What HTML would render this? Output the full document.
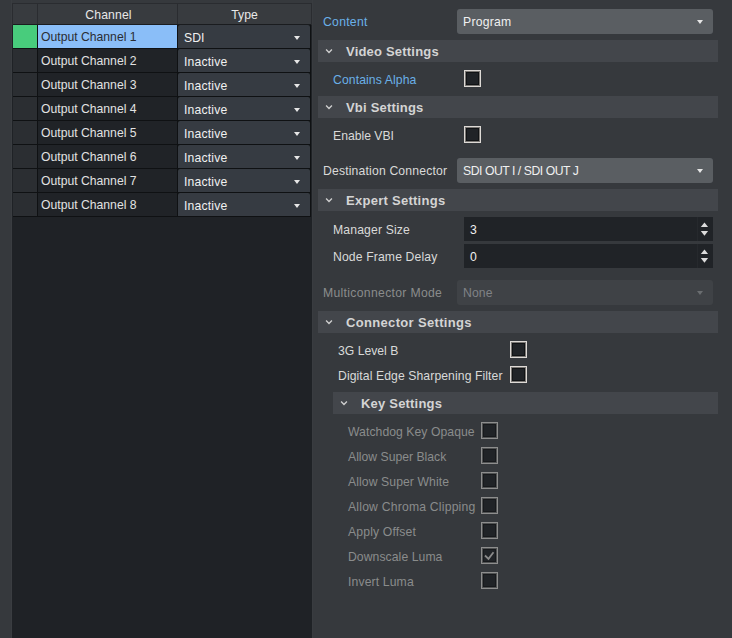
<!DOCTYPE html>
<html><head><meta charset="utf-8">
<style>
*{margin:0;padding:0;box-sizing:border-box}
html,body{width:732px;height:638px;overflow:hidden;background:#36393d;font-family:"Liberation Sans",sans-serif;font-size:12.2px;color:#d9d9d9}
div{position:absolute}
svg{position:absolute}
.t{white-space:nowrap;line-height:16px;height:16px;letter-spacing:0.12px}
.hdr{background:#383b3f}
.rh{background:#2b2e32}
.cell{background:#202327}
.cb{background:#363b42;border-radius:2px 2px 0 0}
.arr{width:0;height:0;border-left:3.5px solid transparent;border-right:3.5px solid transparent;border-top:4px solid #e6e6e6}
.bar{background:#43464b;height:22px;left:318px;width:400px}
.bt{font-weight:bold;font-size:13px;letter-spacing:0.2px;color:#d4d4d4}
.chk{width:17px;height:17px;border:1px solid #dedad6;box-shadow:inset 0 0 0 1px #7a7774,inset 0 0 0 2px #111315;background:#202327}
.dchk{width:17px;height:17px;border:1px solid #8e8e8e;box-shadow:inset 0 0 0 1px #505253,inset 0 0 0 2px #17191c;background:#202327}
.blue{color:#6ab0e8}
.dis{color:#8a8c8c}
.combo{left:457px;width:256px;height:25px;background:#5a5e62;border-radius:3px}
.spin{left:464px;width:249px;height:24px;background:#202327}
</style></head><body>
<div style="left:11px;top:0;width:1px;height:638px;background:#3a3d41"></div>
<div style="left:312px;top:0;width:1px;height:638px;background:#393c40"></div>
<div style="left:12px;top:3px;width:300px;height:635px;background:#1f2226"></div>
<div style="left:12px;top:3px;width:300px;height:22px;background:#2a2c30"></div>
<div style="left:13px;top:24px;width:298px;height:193px;background:#0f1113"></div>
<div style="left:13px;top:24px;width:298px;height:1px;background:#1a1c1f"></div>
<div class="hdr" style="left:13px;top:4px;width:24px;height:20px"></div>
<div class="hdr" style="left:38px;top:4px;width:139px;height:20px"></div>
<div class="hdr" style="left:178px;top:4px;width:133px;height:20px"></div>
<div class="t" style="left:39px;top:7px;width:139px;text-align:center;color:#e8e8e8;letter-spacing:0.13px">Channel</div>
<div class="t" style="left:178px;top:7px;width:133px;text-align:center;color:#e8e8e8;letter-spacing:0">Type</div>
<div class="rh" style="left:13px;top:25px;width:24px;height:23px;background:#48cc7c"></div>
<div class="cell" style="left:38px;top:25px;width:139px;height:23px;background:#8abef8"></div>
<div class="t" style="left:41px;top:29px;letter-spacing:0;color:#2a2d33">Output Channel 1</div>
<div class="cb" style="left:178px;top:25px;width:132px;height:23px"></div>
<div class="t" style="left:184px;top:30px;color:#f0f0f0;letter-spacing:0">SDI</div>
<div class="arr" style="left:294px;top:36px"></div>
<div class="rh" style="left:13px;top:49px;width:24px;height:23px"></div>
<div class="cell" style="left:38px;top:49px;width:139px;height:23px"></div>
<div class="t" style="left:41px;top:53px;letter-spacing:0;color:#e2e2e2">Output Channel 2</div>
<div class="cb" style="left:178px;top:49px;width:132px;height:23px"></div>
<div class="t" style="left:184px;top:54px;color:#f0f0f0;letter-spacing:0.18px">Inactive</div>
<div class="arr" style="left:294px;top:60px"></div>
<div class="rh" style="left:13px;top:73px;width:24px;height:23px"></div>
<div class="cell" style="left:38px;top:73px;width:139px;height:23px"></div>
<div class="t" style="left:41px;top:77px;letter-spacing:0;color:#e2e2e2">Output Channel 3</div>
<div class="cb" style="left:178px;top:73px;width:132px;height:23px"></div>
<div class="t" style="left:184px;top:78px;color:#f0f0f0;letter-spacing:0.18px">Inactive</div>
<div class="arr" style="left:294px;top:84px"></div>
<div class="rh" style="left:13px;top:97px;width:24px;height:23px"></div>
<div class="cell" style="left:38px;top:97px;width:139px;height:23px"></div>
<div class="t" style="left:41px;top:101px;letter-spacing:0;color:#e2e2e2">Output Channel 4</div>
<div class="cb" style="left:178px;top:97px;width:132px;height:23px"></div>
<div class="t" style="left:184px;top:102px;color:#f0f0f0;letter-spacing:0.18px">Inactive</div>
<div class="arr" style="left:294px;top:108px"></div>
<div class="rh" style="left:13px;top:121px;width:24px;height:23px"></div>
<div class="cell" style="left:38px;top:121px;width:139px;height:23px"></div>
<div class="t" style="left:41px;top:125px;letter-spacing:0;color:#e2e2e2">Output Channel 5</div>
<div class="cb" style="left:178px;top:121px;width:132px;height:23px"></div>
<div class="t" style="left:184px;top:126px;color:#f0f0f0;letter-spacing:0.18px">Inactive</div>
<div class="arr" style="left:294px;top:132px"></div>
<div class="rh" style="left:13px;top:145px;width:24px;height:23px"></div>
<div class="cell" style="left:38px;top:145px;width:139px;height:23px"></div>
<div class="t" style="left:41px;top:149px;letter-spacing:0;color:#e2e2e2">Output Channel 6</div>
<div class="cb" style="left:178px;top:145px;width:132px;height:23px"></div>
<div class="t" style="left:184px;top:150px;color:#f0f0f0;letter-spacing:0.18px">Inactive</div>
<div class="arr" style="left:294px;top:156px"></div>
<div class="rh" style="left:13px;top:169px;width:24px;height:23px"></div>
<div class="cell" style="left:38px;top:169px;width:139px;height:23px"></div>
<div class="t" style="left:41px;top:173px;letter-spacing:0;color:#e2e2e2">Output Channel 7</div>
<div class="cb" style="left:178px;top:169px;width:132px;height:23px"></div>
<div class="t" style="left:184px;top:174px;color:#f0f0f0;letter-spacing:0.18px">Inactive</div>
<div class="arr" style="left:294px;top:180px"></div>
<div class="rh" style="left:13px;top:193px;width:24px;height:23px"></div>
<div class="cell" style="left:38px;top:193px;width:139px;height:23px"></div>
<div class="t" style="left:41px;top:197px;letter-spacing:0;color:#e2e2e2">Output Channel 8</div>
<div class="cb" style="left:178px;top:193px;width:132px;height:23px"></div>
<div class="t" style="left:184px;top:198px;color:#f0f0f0;letter-spacing:0.18px">Inactive</div>
<div class="arr" style="left:294px;top:204px"></div>
<div class="t blue" style="left:323px;top:14px;letter-spacing:0.28px">Content</div>
<div class="combo" style="top:9px"></div>
<div class="t" style="left:463px;top:14px;color:#f0f0f0;letter-spacing:0.25px">Program</div>
<div class="arr" style="left:697px;top:20px"></div>
<div class="bar" style="top:40px;left:318px;width:400px"></div>
<svg style="left:324px;top:47px" width="10" height="8"><polyline points="2.1,2.5 5,5.5 7.9,2.5" fill="none" stroke="#cfcfcf" stroke-width="1.35"/></svg>
<div class="t bt" style="left:346px;top:44px;letter-spacing:0.2px">Video Settings</div>
<div class="t blue" style="left:333px;top:72px;letter-spacing:0.1px">Contains Alpha</div>
<div class="chk" style="left:464px;top:70px"></div>
<div class="bar" style="top:96px;left:318px;width:400px"></div>
<svg style="left:324px;top:103px" width="10" height="8"><polyline points="2.1,2.5 5,5.5 7.9,2.5" fill="none" stroke="#cfcfcf" stroke-width="1.35"/></svg>
<div class="t bt" style="left:346px;top:100px;letter-spacing:0.2px">Vbi Settings</div>
<div class="t" style="left:333px;top:128px;letter-spacing:0">Enable VBI</div>
<div class="chk" style="left:464px;top:126px"></div>
<div class="t" style="left:323px;top:163px;letter-spacing:0.17px">Destination Connector</div>
<div class="combo" style="top:158px"></div>
<div class="t" style="left:463px;top:163px;color:#f0f0f0;letter-spacing:-0.45px">SDI OUT I / SDI OUT J</div>
<div class="arr" style="left:697px;top:169px"></div>
<div class="bar" style="top:189px;left:318px;width:400px"></div>
<svg style="left:324px;top:196px" width="10" height="8"><polyline points="2.1,2.5 5,5.5 7.9,2.5" fill="none" stroke="#cfcfcf" stroke-width="1.35"/></svg>
<div class="t bt" style="left:346px;top:193px;letter-spacing:0.27px">Expert Settings</div>
<div class="t" style="left:333px;top:222px;letter-spacing:0.15px">Manager Size</div>
<div class="spin" style="top:217px"></div>
<div style="left:697px;top:217px;width:1px;height:24px;background:#26292d"></div>
<div class="t" style="left:470px;top:222px;color:#f0f0f0">3</div>
<svg style="left:698px;top:217px" width="15" height="24"><polygon points="2.8,10 10.1,10 6.45,5.5" fill="#dcdcdc"/><polygon points="2.8,14 10.1,14 6.45,18.8" fill="#dcdcdc"/></svg>
<div class="t" style="left:333px;top:249px;letter-spacing:0.13px">Node Frame Delay</div>
<div class="spin" style="top:244px"></div>
<div style="left:697px;top:244px;width:1px;height:24px;background:#26292d"></div>
<div class="t" style="left:470px;top:249px;color:#f0f0f0">0</div>
<svg style="left:698px;top:244px" width="15" height="24"><polygon points="2.8,10 10.1,10 6.45,5.5" fill="#dcdcdc"/><polygon points="2.8,14 10.1,14 6.45,18.8" fill="#dcdcdc"/></svg>
<div class="t dis" style="left:323px;top:285px;letter-spacing:0.32px">Multiconnector Mode</div>
<div class="combo" style="top:280px;background:#3f4246"></div>
<div class="t dis" style="left:463px;top:285px;color:#808386">None</div>
<div class="arr" style="left:697px;top:291px;border-top-color:#6a6d70"></div>
<div class="bar" style="top:311px;left:318px;width:400px"></div>
<svg style="left:324px;top:318px" width="10" height="8"><polyline points="2.1,2.5 5,5.5 7.9,2.5" fill="none" stroke="#cfcfcf" stroke-width="1.35"/></svg>
<div class="t bt" style="left:346px;top:315px;letter-spacing:0.33px">Connector Settings</div>
<div class="t" style="left:338px;top:343px;letter-spacing:0">3G Level B</div>
<div class="chk" style="left:510px;top:341px"></div>
<div class="t" style="left:338px;top:368px;letter-spacing:0.09px">Digital Edge Sharpening Filter</div>
<div class="chk" style="left:510px;top:366px"></div>
<div class="bar" style="top:392px;left:333px;width:385px"></div>
<svg style="left:339px;top:399px" width="10" height="8"><polyline points="2.1,2.5 5,5.5 7.9,2.5" fill="none" stroke="#cfcfcf" stroke-width="1.35"/></svg>
<div class="t bt" style="left:361px;top:396px;letter-spacing:0.2px">Key Settings</div>
<div class="t dis" style="left:348px;top:424px;letter-spacing:0.06px">Watchdog Key Opaque</div>
<div class="dchk" style="left:481px;top:422px"></div>
<div class="t dis" style="left:348px;top:449px;letter-spacing:0px">Allow Super Black</div>
<div class="dchk" style="left:481px;top:447px"></div>
<div class="t dis" style="left:348px;top:474px;letter-spacing:0.09px">Allow Super White</div>
<div class="dchk" style="left:481px;top:472px"></div>
<div class="t dis" style="left:348px;top:499px;letter-spacing:0.2px">Allow Chroma Clipping</div>
<div class="dchk" style="left:481px;top:497px"></div>
<div class="t dis" style="left:348px;top:524px;letter-spacing:0.15px">Apply Offset</div>
<div class="dchk" style="left:481px;top:522px"></div>
<div class="t dis" style="left:348px;top:549px;letter-spacing:0.07px">Downscale Luma</div>
<div class="dchk" style="left:481px;top:547px"></div>
<svg style="left:481px;top:547px" width="17" height="17"><polyline points="4,8.5 7.5,11.8 12.5,5.2" fill="none" stroke="#8a8a8a" stroke-width="1.8"/></svg>
<div class="t dis" style="left:348px;top:574px;letter-spacing:0.13px">Invert Luma</div>
<div class="dchk" style="left:481px;top:572px"></div>
</body></html>
